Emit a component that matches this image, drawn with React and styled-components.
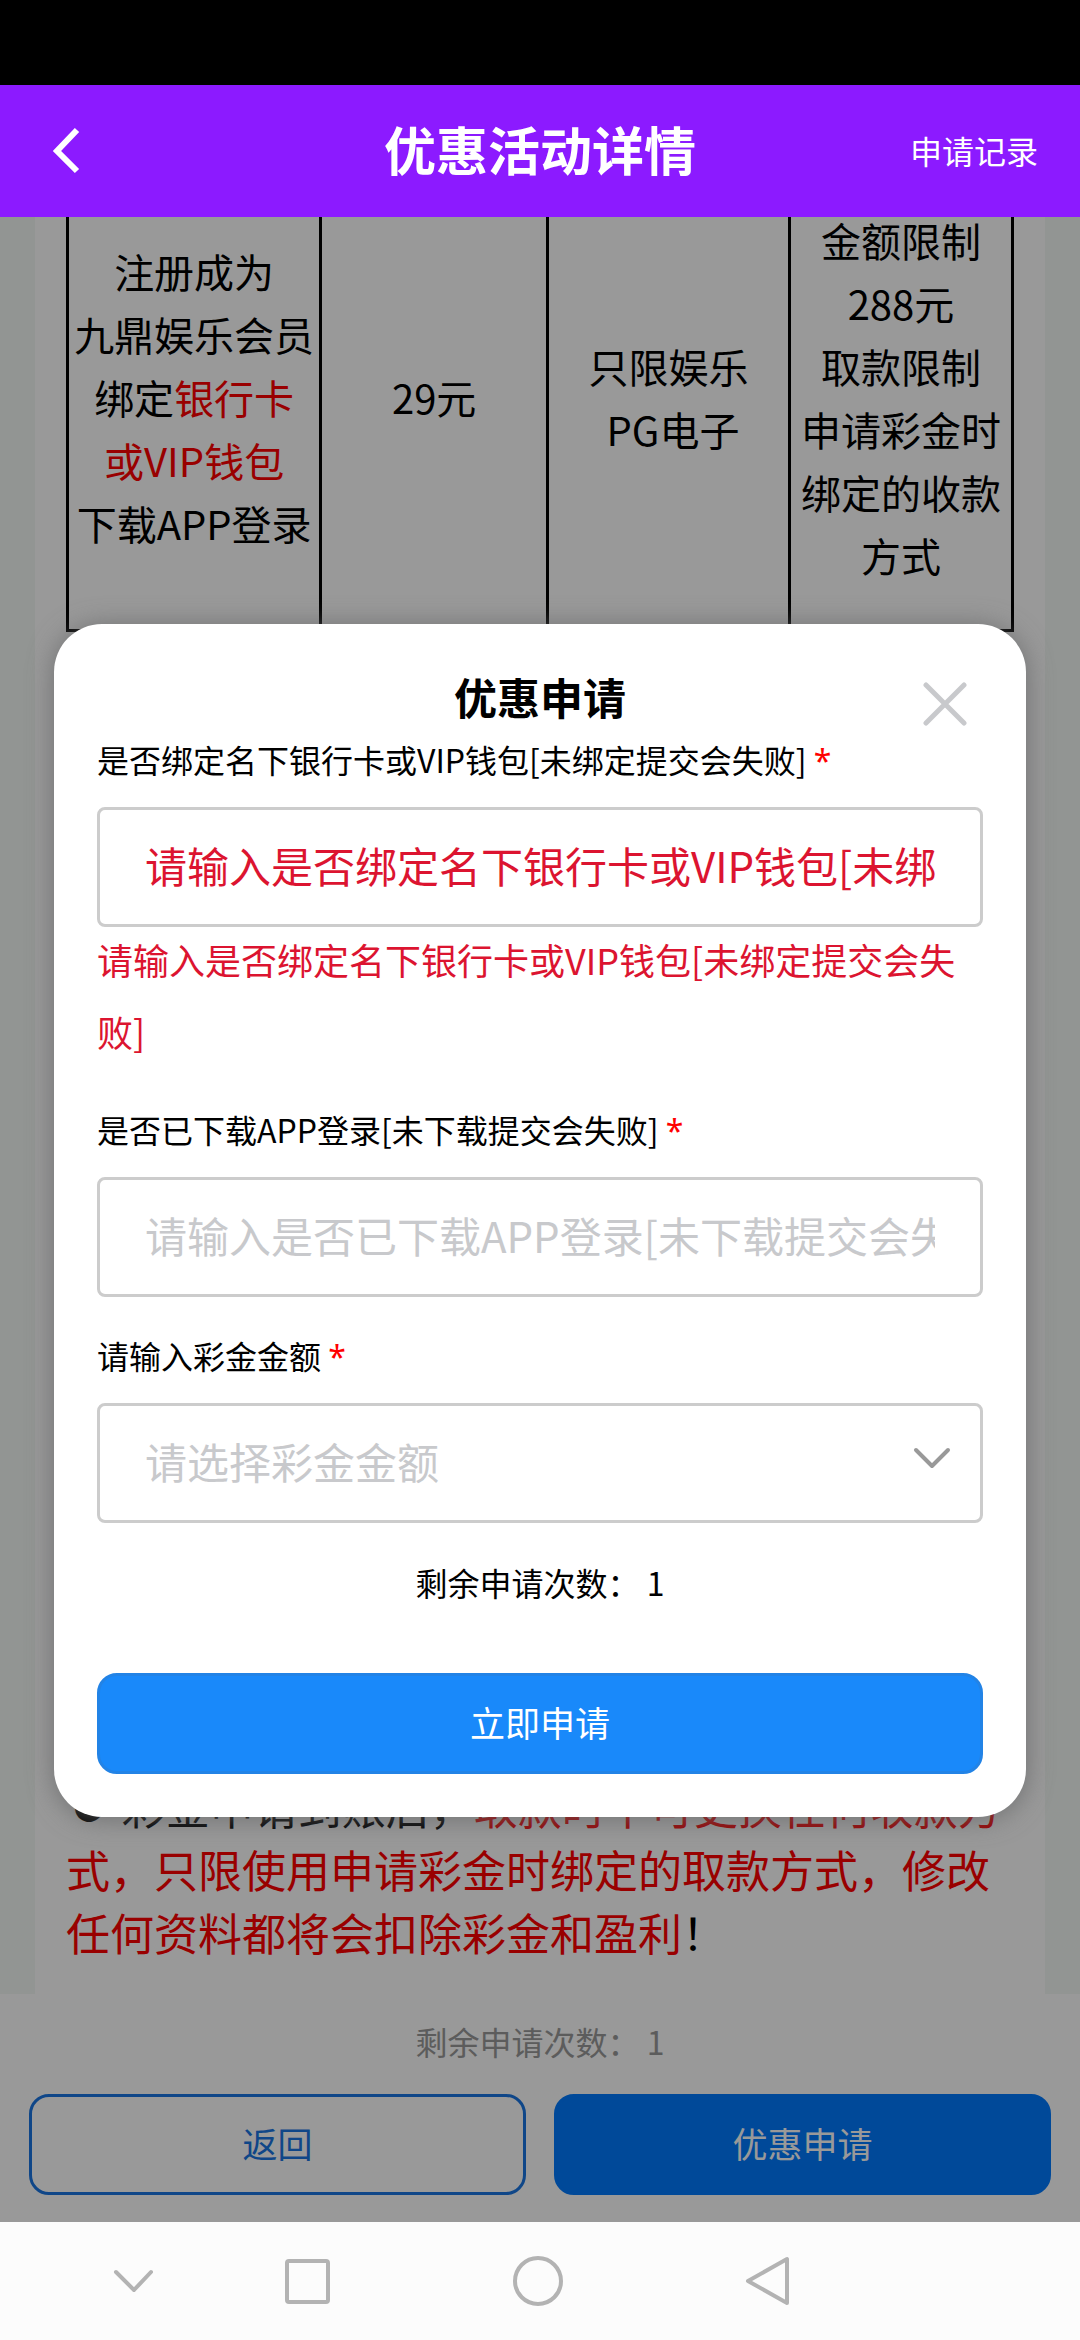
import React, { useState } from "react";
import styled, { createGlobalStyle } from "styled-components";

const GlobalStyle = createGlobalStyle`
  * {
    box-sizing: border-box;
  }

  body {
    margin: 0;
    background-color: #000;
    font-family: "Noto Sans CJK SC", "Noto Sans", sans-serif;
  }

  button, input, select {
    font-family: inherit;
  }
`;

const Screen = styled.div`
  display: flex;
  flex-direction: column;
  min-height: 100vh;
`;

const StatusBar = styled.div`
  height: 85px;
  background-color: #000;
`;

const Header = styled.header`
  display: grid;
  grid-template-columns: 1fr auto 1fr;
  align-items: center;
  height: 132px;
  padding: 0 42px 2px;
  background-color: #8c1aff;
  color: #fff;
`;

const BackButton = styled.button`
  display: flex;
  justify-self: start;
  padding: 8px;
  background: none;
  border: none;
  color: inherit;
  cursor: pointer;
`;

const PageTitle = styled.h1`
  margin: 0;
  padding-bottom: 2px;
  font-size: 52px;
  font-weight: 700;
  line-height: 64px;
`;

const RecordLink = styled.a`
  justify-self: end;
  color: inherit;
  font-size: 32px;
  text-decoration: none;
`;

const Main = styled.main`
  position: relative;
  flex: 1;
  display: flex;
  flex-direction: column;
  background-color: #fff;
`;

const Content = styled.div`
  flex: 1;
  display: flex;
  padding: 0 35px;
  background-color: #f3f8f6;
  overflow: hidden;
`;

const Article = styled.article`
  flex: 1;
  display: flex;
  flex-direction: column;
  justify-content: space-between;
  padding: 0 31px 30px;
  background-color: #fff;
  line-height: 63px;
`;

const RuleTable = styled.table`
  width: 100%;
  margin-top: -50px;
  border-collapse: collapse;
  table-layout: fixed;
  font-size: 40px;
  text-align: center;
`;

const RuleCell = styled.td`
  width: ${(props) => props.$width};
  height: 462px;
  padding: 0 0 4px;
  border: 3px solid #000;
  white-space: nowrap;
`;

const Red = styled.span`
  color: #f00;
`;

const Star = styled(Red)`
  font-family: "Noto Sans", sans-serif;
  line-height: 1;
`;

const Notice = styled.p`
  margin: 0;
  font-size: 44px;
`;

const Bullet = styled.span`
  display: inline-block;
  width: 46px;
  font-size: 31px;
  line-height: 1;
  text-align: center;
  vertical-align: 6px;
`;

const Footer = styled.footer`
  display: flex;
  flex-direction: column;
  gap: 27px;
  padding: 22px 29px 27px;
`;

const FooterCount = styled.p`
  margin: 0;
  color: #999;
  font-size: 32px;
  line-height: 51px;
  text-align: center;
`;

const FooterButtons = styled.div`
  display: grid;
  grid-template-columns: 1fr 1fr;
  gap: 28px;
`;

const Button = styled.button`
  width: 100%;
  height: 101px;
  padding: 0 0 4px;
  background-color: ${(props) => (props.$plain ? "#fff" : props.$color)};
  border: 3px solid ${(props) => props.$border || props.$color};
  border-radius: 20px;
  color: ${(props) => (props.$plain ? props.$color : "#fff")};
  font-size: 35px;
  cursor: pointer;
`;

const Overlay = styled.div`
  position: absolute;
  inset: 0;
  display: flex;
  align-items: center;
  padding: 2px 54px 0;
  background-color: rgba(0, 0, 0, 0.4);
`;

const Dialog = styled.form`
  flex: 1;
  min-width: 0;
  padding: 43px;
  background-color: #fff;
  border-radius: 48px;
  box-shadow: 0 2px 26px rgba(100, 101, 102, 0.8);
`;

const DialogHeader = styled.div`
  display: grid;
  grid-template-columns: 1fr auto 1fr;
  height: 62px;
`;

const DialogTitle = styled.h2`
  grid-column: 2;
  margin: 0;
  font-size: 43px;
  font-weight: 700;
  line-height: 58px;
`;

const CloseButton = styled.button`
  display: flex;
  align-self: end;
  justify-self: end;
  margin-right: 13px;
  padding: 3px;
  background: none;
  border: none;
  color: #c8c9cc;
  cursor: pointer;
`;

const Field = styled.div`
  margin-bottom: 28px;
`;

const Label = styled.label`
  display: block;
  margin-bottom: 18px;
  font-size: 32px;
  line-height: 60px;
`;

const Input = styled.input`
  display: block;
  width: 100%;
  height: 120px;
  padding: 0 45px 6px;
  background-color: #fff;
  border: 3px solid #ccc;
  border-radius: 8px;
  color: #000;
  font-size: 42px;
  outline: none;

  &::placeholder {
    color: ${(props) => (props.$error ? "#dc1430" : "#c8c9cc")};
    opacity: 1;
  }
`;

const SelectBox = styled.div`
  position: relative;
`;

const Select = styled(Input)`
  appearance: none;
  color: #c8c9cc;
`;

const SelectArrow = styled.svg`
  position: absolute;
  top: 42px;
  right: 30px;
  pointer-events: none;
`;

const ErrorText = styled.p`
  margin: -4px 0 32px;
  color: #dc1430;
  font-size: 36px;
  line-height: 72px;
`;

const Count = styled.p`
  margin: 0 0 60px;
  font-size: 32px;
  line-height: 62px;
  text-align: center;
`;

const NavBar = styled.nav`
  display: grid;
  grid-template-columns: 1fr 2fr 2fr 2fr;
  align-items: center;
  justify-items: center;
  height: 118px;
  padding: 0 18% 0 7%;
  background-color: #fcfcfc;
`;

const NavButton = styled.button`
  display: flex;
  padding: 0;
  background: none;
  border: none;
  color: #b3b3b3;
  cursor: pointer;
`;

const NAV_ITEMS = [
  { name: "收起", shape: <path d="M13 21 L31 39 L48 21" /> },
  { name: "最近任务", shape: <rect x="10" y="10" width="41" height="41" rx="2" /> },
  { name: "主屏幕", shape: <circle cx="30" cy="30" r="23" /> },
  { name: "返回上一页", shape: <path d="M47 8 V52 L8 30 Z" /> },
];

const RULES = [
  {
    width: "26.8%",
    content: (
      <>
        注册成为
        <br />
        九鼎娱乐会员
        <br />
        绑定<Red>银行卡</Red>
        <br />
        <Red>或VIP钱包</Red>
        <br />
        下载APP登录
      </>
    ),
  },
  { width: "24%", content: "29元" },
  {
    width: "25.6%",
    content: (
      <>
        只限娱乐
        <br />
        &nbsp;PG电子
      </>
    ),
  },
  {
    width: "23.6%",
    content: (
      <>
        金额限制
        <br />
        288元
        <br />
        取款限制
        <br />
        申请彩金时
        <br />
        绑定的收款
        <br />
        方式
      </>
    ),
  },
];

const App = () => {
  const [bound, setBound] = useState("");
  const [downloaded, setDownloaded] = useState("");
  const [amount, setAmount] = useState("");
  const [open, setOpen] = useState(true);
  const remaining = 1;

  const onSubmit = (event) => {
    event.preventDefault();
  };

  return (
    <Screen>
      <GlobalStyle />
      <StatusBar />
      <Header>
        <BackButton type="button" aria-label="返回">
          <svg width="34" height="48" viewBox="0 0 34 48" fill="none">
            <path d="M27 4 L7 25 L27 45" stroke="currentColor" strokeWidth="6" />
          </svg>
        </BackButton>
        <PageTitle>优惠活动详情</PageTitle>
        <RecordLink href="#record">申请记录</RecordLink>
      </Header>
      <Main>
        <Content>
          <Article>
            <RuleTable>
              <tbody>
                <tr>
                  {RULES.map((rule) => (
                    <RuleCell key={rule.width} $width={rule.width}>
                      {rule.content}
                    </RuleCell>
                  ))}
                </tr>
              </tbody>
            </RuleTable>
            <Notice>
              <Bullet>●</Bullet> 彩金申请到账后，
              <Red>
                取款时不可更换任何收款方式，只限使用申请彩金时绑定的取款方式，修改任何资料都将会扣除彩金和盈利
              </Red>
              ！
            </Notice>
          </Article>
        </Content>
        <Footer>
          <FooterCount>剩余申请次数： {remaining}</FooterCount>
          <FooterButtons>
            <Button type="button" $plain $color="#1976e3">
              返回
            </Button>
            <Button type="button" $color="#007aff" onClick={() => setOpen(true)}>
              优惠申请
            </Button>
          </FooterButtons>
        </Footer>
        {open && (
          <Overlay>
            <Dialog onSubmit={onSubmit}>
              <DialogHeader>
                <DialogTitle>优惠申请</DialogTitle>
                <CloseButton
                  type="button"
                  aria-label="关闭"
                  onClick={() => setOpen(false)}
                >
                  <svg width="44" height="44" viewBox="0 0 44 44" fill="none">
                    <path
                      d="M3 3 L41 41 M41 3 L3 41"
                      stroke="currentColor"
                      strokeWidth="5"
                      strokeLinecap="round"
                    />
                  </svg>
                </CloseButton>
              </DialogHeader>
              <Field>
                <Label htmlFor="bound">
                  是否绑定名下银行卡或VIP钱包[未绑定提交会失败] <Star>*</Star>
                </Label>
                <Input
                  id="bound"
                  type="text"
                  $error
                  value={bound}
                  onChange={(event) => setBound(event.target.value)}
                  placeholder="请输入是否绑定名下银行卡或VIP钱包[未绑定提交会失败]"
                />
                <ErrorText>
                  请输入是否绑定名下银行卡或VIP钱包[未绑定提交会失败]
                </ErrorText>
              </Field>
              <Field>
                <Label htmlFor="downloaded">
                  是否已下载APP登录[未下载提交会失败] <Star>*</Star>
                </Label>
                <Input
                  id="downloaded"
                  type="text"
                  value={downloaded}
                  onChange={(event) => setDownloaded(event.target.value)}
                  placeholder="请输入是否已下载APP登录[未下载提交会失败]"
                />
              </Field>
              <Field>
                <Label htmlFor="amount">
                  请输入彩金金额 <Star>*</Star>
                </Label>
                <SelectBox>
                  <Select
                    as="select"
                    id="amount"
                    value={amount}
                    onChange={(event) => setAmount(event.target.value)}
                  >
                    <option value="">请选择彩金金额</option>
                    <option value="29">29元</option>
                  </Select>
                  <SelectArrow width="42" height="26" viewBox="0 0 42 26" fill="none">
                    <path
                      d="M5 5 L21 21 L37 5"
                      stroke="#999"
                      strokeWidth="4"
                      strokeLinecap="round"
                      strokeLinejoin="round"
                    />
                  </SelectArrow>
                </SelectBox>
              </Field>
              <Count>剩余申请次数： {remaining}</Count>
              <Button type="submit" $color="#1989fa" $border="#2283e6">
                立即申请
              </Button>
            </Dialog>
          </Overlay>
        )}
      </Main>
      <NavBar>
        {NAV_ITEMS.map((item) => (
          <NavButton key={item.name} type="button" aria-label={item.name}>
            <svg
              width="60"
              height="60"
              viewBox="0 0 60 60"
              fill="none"
              stroke="currentColor"
              strokeWidth="4"
              strokeLinecap="round"
              strokeLinejoin="round"
            >
              {item.shape}
            </svg>
          </NavButton>
        ))}
      </NavBar>
    </Screen>
  );
};

export default App;
